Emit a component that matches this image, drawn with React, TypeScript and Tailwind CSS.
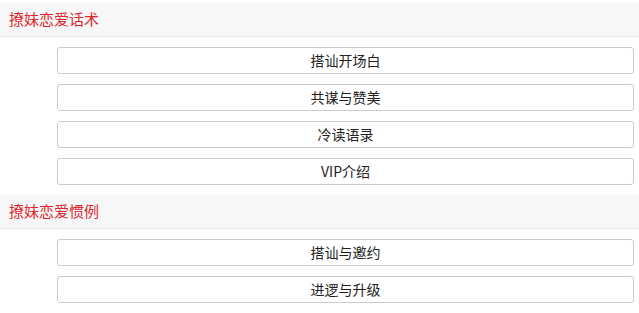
import React from "react";

const sections = [
  { title: "撩妹恋爱话术", items: ["搭讪开场白", "共谋与赞美", "冷读语录", "VIP介绍"] },
  { title: "撩妹恋爱惯例", items: ["搭讪与邀约", "进逻与升级"] },
];

export default function App() {
  return (
    <div
      className="w-[639px] h-[313px] overflow-hidden bg-white pt-[3px]"
      style={{ fontFamily: '"Microsoft YaHei", "Noto Sans CJK SC", sans-serif' }}
    >
      {sections.map((s) => (
        <div key={s.title}>
          <div className="h-[34px] bg-[#f7f7f7] border-b border-[#e5e5e5] flex items-center pl-[9px] text-[15px] text-[#e0262d]">
            {s.title}
          </div>
          <div className="flex flex-col gap-[10px] py-[10px] pl-[57px] pr-[5px]">
            {s.items.map((it) => (
              <div
                key={it}
                className="h-[27px] border border-[#cccccc] rounded-[3px] flex items-center justify-center text-[14px] text-[#222]"
              >
                {it}
              </div>
            ))}
          </div>
        </div>
      ))}
    </div>
  );
}
